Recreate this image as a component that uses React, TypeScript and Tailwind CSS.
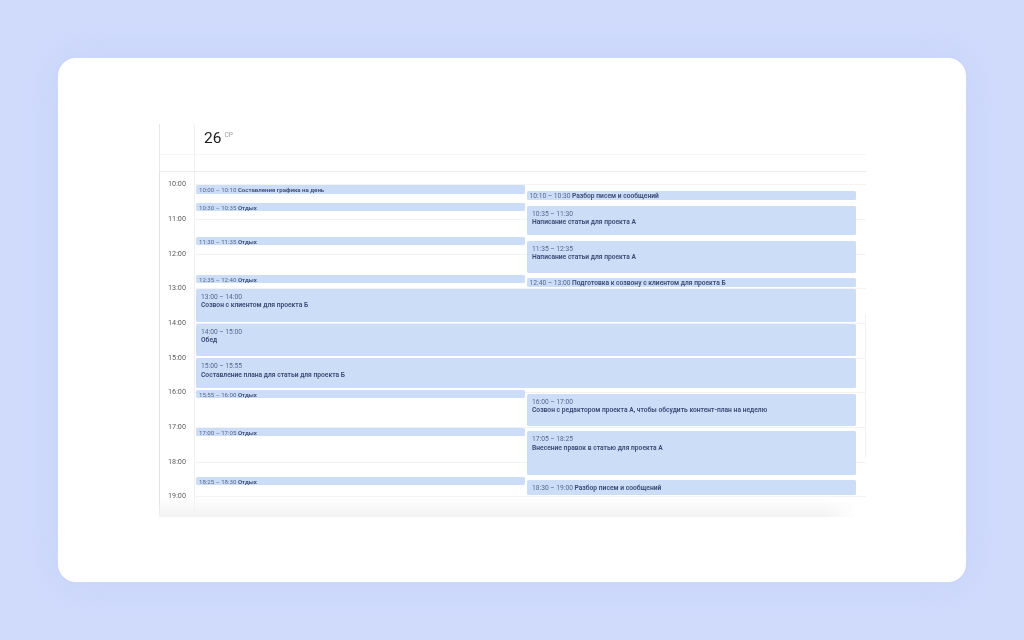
import React from 'react';

const hours = ['10:00', '11:00', '12:00', '13:00', '14:00', '15:00', '16:00', '17:00', '18:00', '19:00'];

type EventProps = { time: string; title: string; className: string };

// one line event, time and title side by side
const InlineEvent: React.FC<EventProps & { textClass?: string }> = ({ time, title, className, textClass = 'text-[6.1px]' }) => (
  <div className={`flex items-center gap-[1.5px] whitespace-nowrap rounded-[1.5px] bg-[#bfd5f5]/80 pt-[1.5px] leading-none ${textClass} ${className}`}>
    <span className="text-[#56678f]">{time}</span>
    <span className="font-semibold text-[#3a4a75]">{title}</span>
  </div>
);

// taller event, title under the time
const BlockEvent: React.FC<EventProps> = ({ time, title, className }) => (
  <div className={`rounded-[1.5px] bg-[#bfd5f5]/80 pt-[4px] text-[6.7px] leading-[8.3px] ${className}`}>
    <div className="text-[#56678f]">{time}</div>
    <div className="font-semibold text-[#3a4a75]">{title}</div>
  </div>
);

export default function App() {
  return (
    <div className="flex h-screen w-full items-center justify-center bg-[#d0dbfc]" style={{ fontFamily: "Roboto, sans-serif" }}>
      <div className="h-[524px] w-[908px] rounded-[18px] bg-white pl-[101px] pt-[66px] shadow-[0_0_40px_rgba(120,140,220,0.12)]">
        <div className="relative h-[393px] w-[707px] overflow-hidden blur-[0.4px]">
          {/* Header */}
          <div className="flex h-[31px] border-b border-[#f6f6f6]">
            <div className="w-[36px] border-x border-l-[#e8e8e8] border-r-[#f0f0f0]" />
            <div className="flex items-start pl-[9px] pt-[3px]">
              <span className="text-[15.5px] leading-[22px] text-[#1c1c1c]">26</span>
              <span className="ml-[3px] mt-[4px] text-[6.5px] leading-[8px] text-[#9a9a9a]">СР</span>
            </div>
          </div>
          <div className="flex h-[17px] border-b border-[#ececec]">
            <div className="w-[36px] border-x border-l-[#e8e8e8] border-r-[#f0f0f0]" />
          </div>

          {/* Grid */}
          <div className="flex h-[345px]">
            <div className="flex w-[36px] flex-col items-center gap-[24.67px] border-x border-l-[#e2e2e2] border-r-[#f0f0f0] pt-[7.3px]">
              {hours.map((hour) => (
                <div key={hour} className="h-[10px] text-[7.2px] leading-[10px] text-[#5c5c5c]">{hour}</div>
              ))}
            </div>

            <div className="relative flex-1 pl-px pr-[10px] pt-[13px]">
              {/* hour lines behind the events */}
              <div className="absolute inset-x-0 top-[12.3px]">
                {hours.map((hour) => (
                  <div key={hour} className="h-[34.67px] border-t border-[#f3f3f3]" />
                ))}
              </div>

              <div className="relative">
                <div className="grid h-[104px] grid-cols-2">
                  <div className="mr-px flex flex-col">
                    <InlineEvent className="h-[8.5px] pl-[3px]" time="10:00 – 10:10" title="Составление графика на день" />
                    <InlineEvent className="mt-[9.2px] h-[8.3px] pl-[3px]" time="10:30 – 10:35" title="Отдых" />
                    <InlineEvent className="mt-[26.3px] h-[8.2px] pl-[3px]" time="11:30 – 11:35" title="Отдых" />
                    <InlineEvent className="mt-[29.5px] h-[8.3px] pl-[3px]" time="12:35 – 12:40" title="Отдых" />
                  </div>
                  <div className="ml-[0.5px] flex flex-col">
                    <InlineEvent className="mt-[6px] h-[9.3px] pl-[3px]" textClass="text-[6.7px]" time="10:10 – 10:30" title="Разбор писем и сообщений" />
                    <BlockEvent className="mt-[5.7px] h-[29px] pl-[5.5px]" time="10:35 – 11:30" title="Написание статьи для проекта А" />
                    <BlockEvent className="mt-[5.7px] h-[32.3px] pl-[5.5px]" time="11:35 – 12:35" title="Написание статьи для проекта А" />
                    <InlineEvent className="mt-[5px] h-[9px] pl-[3px]" textClass="text-[6.7px]" time="12:40 – 13:00" title="Подготовка к созвону с клиентом для проекта Б" />
                  </div>
                </div>

                <BlockEvent className="h-[33px] pl-[5px]" time="13:00 – 14:00" title="Созвон с клиентом для проекта Б" />
                <BlockEvent className="mt-[1.7px] h-[32.6px] pl-[5px]" time="14:00 – 15:00" title="Обед" />
                <BlockEvent className="mt-[2px] h-[30px] pl-[5px]" time="15:00 – 15:55" title="Составление плана для статьи для проекта Б" />

                <div className="grid grid-cols-2">
                  <div className="mr-px flex flex-col">
                    <InlineEvent className="mt-[2px] h-[8px] pl-[3px]" time="15:55 – 16:00" title="Отдых" />
                    <InlineEvent className="mt-[29.7px] h-[8px] pl-[3px]" time="17:00 – 17:05" title="Отдых" />
                    <InlineEvent className="mt-[41px] h-[8px] pl-[3px]" time="18:25 – 18:30" title="Отдых" />
                  </div>
                  <div className="ml-[0.5px] flex flex-col">
                    <BlockEvent className="mt-[5.4px] h-[32.3px] pl-[5.5px]" time="16:00 – 17:00" title="Созвон с редактором проекта А, чтобы обсудить контент-план на неделю" />
                    <BlockEvent className="mt-[5.3px] h-[43.7px] pl-[5.5px]" time="17:05 – 18:25" title="Внесение правок в статью для проекта А" />
                    <InlineEvent className="mt-[5.3px] h-[14.7px] pl-[5.5px]" textClass="text-[6.7px]" time="18:30 – 19:00" title="Разбор писем и сообщений" />
                  </div>
                </div>
              </div>
            </div>
          </div>

          {/* Faint edge on the right and the fade at the bottom */}
          <div className="absolute right-0 top-[190px] h-[144px] w-px bg-[#f0f0f0]" />
          <div className="absolute inset-x-0 bottom-0 h-[20px] bg-linear-to-b from-white/0 to-[#f2f2f2] [mask-image:linear-gradient(to_right,black_94%,transparent_99%)]" />
        </div>
      </div>
    </div>
  );
}
